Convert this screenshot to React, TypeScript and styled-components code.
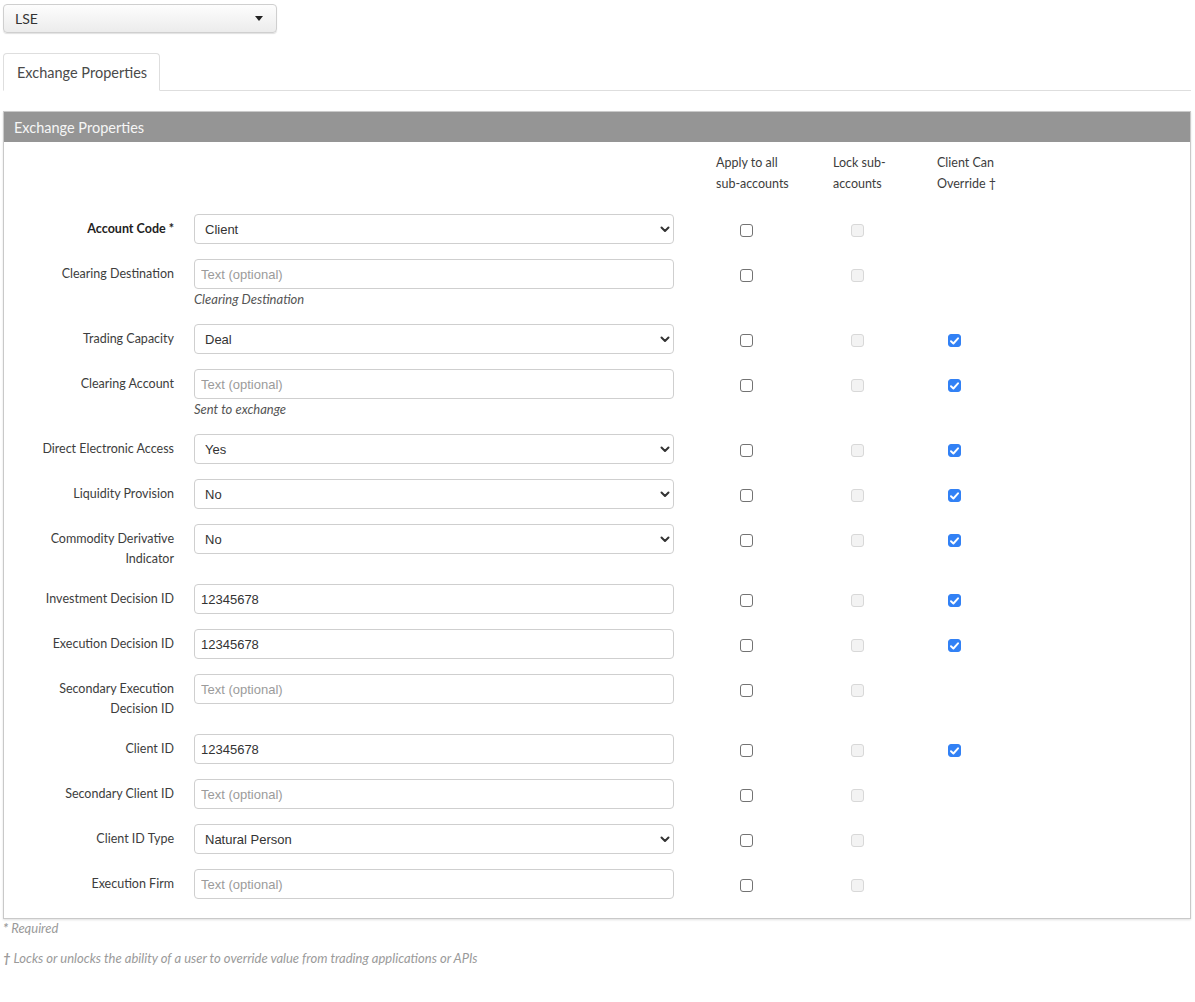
import React from 'react'
import styled, { createGlobalStyle } from 'styled-components'

const GlobalStyle = createGlobalStyle`
  html, body { margin: 0; padding: 0; background: #fff; }
  body { font-family: Lato, "Open Sans", sans-serif; color: #3d3d3d; }
  * { box-sizing: border-box; }
`

const Page = styled.div`
  padding: 4px 4px 0 3px;
`

const ExchangePicker = styled.button`
  width: 274px;
  height: 29px;
  display: flex;
  align-items: center;
  justify-content: space-between;
  padding: 0 11px 0 11px;
  border: 1px solid #cfcfcf;
  border-radius: 4px;
  background: linear-gradient(#fdfdfd, #ececec);
  box-shadow: 0 1px 1px rgba(0, 0, 0, 0.12);
  font-family: Lato, sans-serif;
  font-size: 14px;
  color: #333;
`

const Caret = styled.span`
  width: 0;
  height: 0;
  border-left: 4px solid transparent;
  border-right: 4px solid transparent;
  border-top: 5px solid #222;
  margin-right: 2px;
`

const Tabs = styled.ul`
  list-style: none;
  margin: 20px 0 20px;
  padding: 0;
  display: flex;
  border-bottom: 1px solid #dedede;
  > li {
    height: 38px;
    margin-bottom: -1px;
    padding: 0 12px 0 13px;
    display: flex;
    align-items: center;
    border: 1px solid #dedede;
    border-bottom-color: #fff;
    border-radius: 4px 4px 0 0;
    background: #fff;
    font-size: 14.5px;
    color: #4a4a4a;
  }
`

const Panel = styled.section`
  border: 1px solid #c9c9c9;
  box-shadow: 0 1px 2px rgba(0, 0, 0, 0.12);
`

const PanelTitle = styled.h2`
  margin: 0;
  height: 30px;
  padding: 0 10px;
  display: flex;
  align-items: center;
  background: #959595;
  color: #f6f6f6;
  font-size: 14.5px;
  font-weight: 400;
`

const PanelBody = styled.div`
  padding: 10px 0 4px;
`

const Row = styled.div<{ $head?: boolean }>`
  display: grid;
  grid-template-columns: 190px 480px 159px 104px 1fr;
  margin-bottom: ${p => (p.$head ? '20px' : '15px')};
`

const Label = styled.label<{ $strong?: boolean }>`
  padding: 5px 20px 0 0;
  text-align: right;
  font-size: 12.5px;
  line-height: 20px;
  font-weight: ${p => (p.$strong ? 700 : 400)};
  color: ${p => (p.$strong ? '#222' : '#3d3d3d')};
`

const Field = styled.div`
  position: relative;
`

const TextInput = styled.input`
  width: 100%;
  height: 30px;
  padding: 0 6px;
  border: 1px solid #cfcfcf;
  border-radius: 4px;
  font-family: "Liberation Sans", Arial, sans-serif;
  font-size: 13px;
  color: #333;
  background: #fff;
  outline: none;
  &::placeholder { color: #9b9b9b; }
`

const Select = styled.select`
  appearance: none;
  width: 100%;
  height: 30px;
  padding: 0 28px 0 10px;
  border: 1px solid #cfcfcf;
  border-radius: 4px;
  font-family: "Liberation Sans", Arial, sans-serif;
  font-size: 13px;
  color: #333;
  background: #fff;
  outline: none;
`

const Chevron = styled.svg`
  position: absolute;
  right: 4px;
  top: 12px;
  pointer-events: none;
`

const Hint = styled.div`
  font-size: 13px;
  line-height: 20px;
  font-style: italic;
  color: #555;
`

const ColHead = styled.div<{ $pad: number }>`
  padding-left: ${p => p.$pad}px;
  font-size: 12.5px;
  line-height: 21px;
  color: #3d3d3d;
`

const CheckCell = styled.div<{ $pad: number }>`
  padding: 10px 0 0 ${p => p.$pad}px;
`

const Box = styled.span<{ $state: 'off' | 'disabled' | 'on' }>`
  display: flex;
  align-items: center;
  justify-content: center;
  width: 13px;
  height: 13px;
  border-radius: 3px;
  border: 1px solid
    ${p => (p.$state === 'off' ? '#737373' : p.$state === 'disabled' ? '#d8d8d8' : '#3281f5')};
  background: ${p => (p.$state === 'disabled' ? '#f3f3f3' : p.$state === 'on' ? '#3281f5' : '#fff')};
`

const Notes = styled.div`
  font-size: 13px;
  font-style: italic;
  color: #9a9a9a;
  > p { margin: 0 0 12px; line-height: 18px; }
  b { font-weight: 700; }
`

type Item = {
  label: string
  kind: 'select' | 'text'
  value?: string
  hint?: string
  strong?: boolean
  override?: boolean
}

const items: Item[] = [
  { label: 'Account Code *', kind: 'select', value: 'Client', strong: true },
  { label: 'Clearing Destination', kind: 'text', hint: 'Clearing Destination' },
  { label: 'Trading Capacity', kind: 'select', value: 'Deal', override: true },
  { label: 'Clearing Account', kind: 'text', hint: 'Sent to exchange', override: true },
  { label: 'Direct Electronic Access', kind: 'select', value: 'Yes', override: true },
  { label: 'Liquidity Provision', kind: 'select', value: 'No', override: true },
  { label: 'Commodity Derivative Indicator', kind: 'select', value: 'No', override: true },
  { label: 'Investment Decision ID', kind: 'text', value: '12345678', override: true },
  { label: 'Execution Decision ID', kind: 'text', value: '12345678', override: true },
  { label: 'Secondary Execution Decision ID', kind: 'text' },
  { label: 'Client ID', kind: 'text', value: '12345678', override: true },
  { label: 'Secondary Client ID', kind: 'text' },
  { label: 'Client ID Type', kind: 'select', value: 'Natural Person' },
  { label: 'Execution Firm', kind: 'text' },
]

const labelLines: Record<string, string[]> = {
  'Commodity Derivative Indicator': ['Commodity Derivative', 'Indicator'],
  'Secondary Execution Decision ID': ['Secondary Execution', 'Decision ID'],
}

const Check = ({ state }: { state: 'off' | 'disabled' | 'on' }) => (
  <Box $state={state}>
    {state === 'on' && (
      <svg width="9" height="8" viewBox="0 0 9 8">
        <path d="M1 4.2 L3.4 6.5 L8 1.3" fill="none" stroke="#fff" strokeWidth="1.9" strokeLinecap="round" strokeLinejoin="round" />
      </svg>
    )}
  </Box>
)

const App = () => {
  return (
    <Page>
      <GlobalStyle />
      <ExchangePicker>
        <span>LSE</span>
        <Caret />
      </ExchangePicker>

      <Tabs>
        <li>Exchange Properties</li>
      </Tabs>

      <Panel>
        <PanelTitle>Exchange Properties</PanelTitle>
        <PanelBody>
          <Row $head>
            <div />
            <div />
            <ColHead $pad={42}>Apply to all<br />sub-accounts</ColHead>
            <ColHead $pad={0}>Lock sub-<br />accounts</ColHead>
            <ColHead $pad={0}>Client Can<br />Override †</ColHead>
          </Row>

          {items.map(item => (
            <Row key={item.label}>
              <Label $strong={item.strong}>
                {(labelLines[item.label] || [item.label]).map((line, i) => (
                  <React.Fragment key={line}>
                    {i > 0 && <br />}
                    {line}
                  </React.Fragment>
                ))}
              </Label>
              <Field>
                {item.kind === 'select' ? (
                  <>
                    <Select defaultValue={item.value}>
                      <option>{item.value}</option>
                    </Select>
                    <Chevron width="10" height="7" viewBox="0 0 10 7">
                      <path d="M1.5 1.5 L5 5 L8.5 1.5" fill="none" stroke="#333" strokeWidth="2" strokeLinecap="round" strokeLinejoin="round" />
                    </Chevron>
                  </>
                ) : (
                  <TextInput defaultValue={item.value} placeholder="Text (optional)" />
                )}
                {item.hint && <Hint>{item.hint}</Hint>}
              </Field>
              <CheckCell $pad={66}><Check state="off" /></CheckCell>
              <CheckCell $pad={18}><Check state="disabled" /></CheckCell>
              <CheckCell $pad={11}>{item.override && <Check state="on" />}</CheckCell>
            </Row>
          ))}
        </PanelBody>
      </Panel>

      <Notes>
        <p><b>*</b> Required</p>
        <p><b>†</b> Locks or unlocks the ability of a user to override value from trading applications or APIs</p>
      </Notes>
    </Page>
  )
}

export default App
